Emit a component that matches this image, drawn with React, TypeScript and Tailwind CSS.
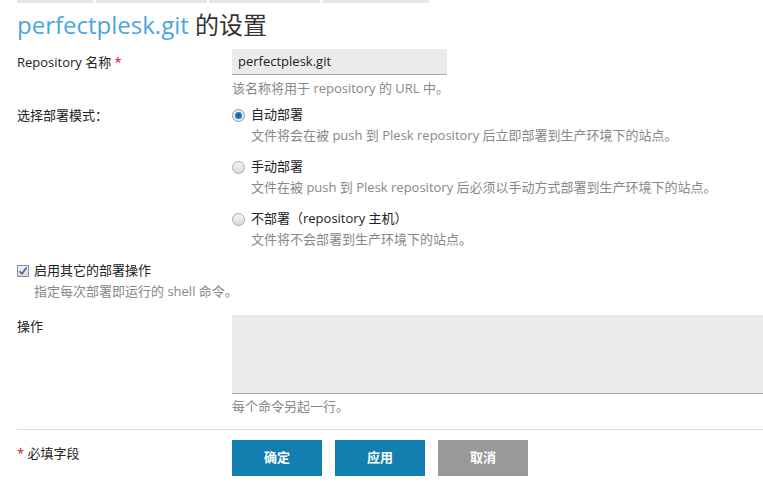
import React from "react";

const font = { fontFamily: '"Open Sans", "Noto Sans CJK SC", sans-serif' };

const Radio = ({ checked }: { checked?: boolean }) => (
  <span
    className={
      "inline-flex w-[13px] h-[13px] rounded-full border items-center justify-center shrink-0 " +
      (checked
        ? "border-[#8a9aa8] bg-[#e9eef2]"
        : "border-[#a9a9a9] bg-gradient-to-b from-[#f4f4f4] to-[#dcdcdc]")
    }
  >
    {checked && <span className="w-[7px] h-[7px] rounded-full bg-[#1668a8] shadow-[inset_0_0_2px_#7cc4f0]" />}
  </span>
);

const Option = ({
  checked,
  title,
  desc,
}: {
  checked?: boolean;
  title: string;
  desc: string;
}) => (
  <div className="flex flex-col">
    <label className="flex items-center gap-[6px] h-[20px] text-[13px] text-[#222]">
      <Radio checked={checked} />
      <span>{title}</span>
    </label>
    <div className="pl-[19px] text-[13px] text-[#888] h-[20px] leading-[20px]">{desc}</div>
  </div>
);

export default function App() {
  return (
    <div className="w-[763px] h-[486px] bg-white overflow-hidden relative" style={font}>
      {/* breadcrumb remnants */}
      <div className="flex h-[3px] pl-[17px]">
        <div className="w-[77px] bg-[#e6e6e6]" />
        <div className="w-[2px]" />
        <div className="w-[111px] bg-[#e6e6e6]" />
        <div className="w-[2px]" />
        <div className="w-[111px] bg-[#e6e6e6]" />
        <div className="w-[2px]" />
        <div className="w-[107px] bg-[#e6e6e6]" />
      </div>

      <h1 className="pl-[17px] pt-[6px] h-[42px] text-[24px] leading-[32px] text-[#333]">
        <span className="text-[#4ba6e0]">perfectplesk.git</span> 的设置
      </h1>

      <div className="pl-[17px] text-[13px] text-[#222]">
        {/* repository name */}
        <div className="flex pt-[4px]">
          <div className="w-[215px] pt-[4px]">
            Repository 名称 <span className="text-[#d0021b]">*</span>
          </div>
          <div className="flex flex-col">
            <div className="w-[215px] h-[26px] bg-[#ebebeb] border-b border-[#aaa] px-[6px] leading-[25px] text-[#222]">
              perfectplesk.git
            </div>
            <div className="text-[13px] text-[#888] pt-[4px] leading-[18px]">
              该名称将用于 repository 的 URL 中。
            </div>
          </div>
        </div>

        {/* deploy mode */}
        <div className="flex pt-[8px]">
          <div className="w-[215px] pt-[1px]">选择部署模式：</div>
          <div className="flex flex-col gap-[12px]">
            <Option
              checked
              title="自动部署"
              desc="文件将会在被 push 到 Plesk repository 后立即部署到生产环境下的站点。"
            />
            <Option
              title="手动部署"
              desc="文件在被 push 到 Plesk repository 后必须以手动方式部署到生产环境下的站点。"
            />
            <Option title="不部署（repository 主机）" desc="文件将不会部署到生产环境下的站点。" />
          </div>
        </div>

        {/* additional actions */}
        <div className="pt-[12px]">
          <label className="flex items-center gap-[5px] h-[20px]">
            <span className="w-[12px] h-[12px] border border-[#8e8f8f] bg-gradient-to-b from-[#f0f0f0] to-[#dadada] flex items-center justify-center">
              <svg width="10" height="10" viewBox="0 0 10 10">
                <path d="M1.5 5.2 L4 7.8 L8.6 1.6" fill="none" stroke="#3a5fa8" strokeWidth="1.6" />
              </svg>
            </span>
            启用其它的部署操作
          </label>
          <div className="pl-[17px] text-[13px] text-[#888] h-[20px] leading-[20px]">
            指定每次部署即运行的 shell 命令。
          </div>
        </div>

        <div className="flex pt-[14px]">
          <div className="w-[215px] pt-[2px]">操作</div>
          <div className="flex flex-col flex-1">
            <textarea className="w-full h-[79px] bg-[#ebebeb] border-b border-[#aaa] outline-none resize-none block" />
            <div className="text-[13px] text-[#888] pt-[3px] leading-[18px]">每个命令另起一行。</div>
          </div>
        </div>

        <div className="mt-[14px] border-t border-[#dcdcdc]" />

        <div className="flex pt-[10px]">
          <div className="w-[215px] pt-[4px]">
            <span className="text-[#d0021b]">*</span> 必填字段
          </div>
          <div className="flex gap-[13px]">
            <button className="w-[90px] h-[36px] bg-[#137fb0] text-white font-bold">确定</button>
            <button className="w-[90px] h-[36px] bg-[#137fb0] text-white font-bold">应用</button>
            <button className="w-[90px] h-[36px] bg-[#999] text-white font-bold">取消</button>
          </div>
        </div>
      </div>
    </div>
  );
}
